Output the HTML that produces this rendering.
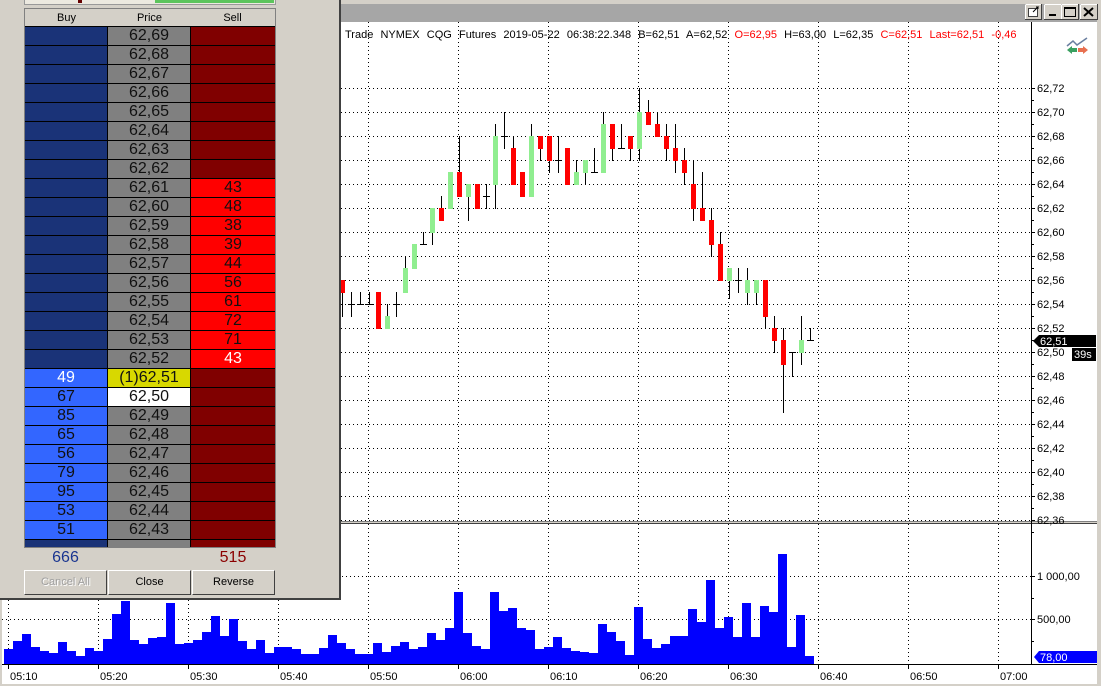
<!DOCTYPE html>
<html><head><meta charset="utf-8">
<style>
*{margin:0;padding:0;box-sizing:border-box}
body{width:1101px;height:686px;overflow:hidden;background:#d4d0c8;font-family:"Liberation Sans",Arial,sans-serif;position:relative}
#chart{position:absolute;left:0;top:0}
#dom{position:absolute;left:0;top:0;width:341px;height:600px;background:#d4d0c8;border-right:2px solid #404040;border-bottom:2px solid #404040}
.top{position:absolute;left:24px;top:0;width:252px;height:5px;background:#ece9e0;border:1px solid #999;border-top:none}
.top .g{position:absolute;left:130px;top:0;width:119px;height:3px;background:#5cc45c}
.top .r{position:absolute;left:53px;top:0;width:4px;height:3px;background:#600}
.grid{position:absolute;left:24px;top:8px;width:252px;height:540px;border:1px solid #808080;overflow:hidden;background:#000}
.hdr{display:flex;height:18px;background:#d4d0c8;font-size:11px;line-height:18px;border-bottom:1px solid #000}
.hdr div{width:83px;text-align:center}
.row{display:flex;height:19px;border-bottom:1px solid #000;font-size:16px;line-height:18px}
.row div{text-align:center;border-right:1px solid #000;color:#111}
.row div:nth-child(1){width:83px}
.row div:nth-child(2){width:83px;background:#808080}
.row div:nth-child(3){width:84px;border-right:none}
.tot{position:absolute;top:549px;font-size:16px}
.btn{position:absolute;top:570px;height:25px;width:83px;font-size:11px;text-align:center;line-height:23px;background:#d4d0c8;border:1px solid;border-color:#fff #404040 #404040 #fff}
</style></head><body>
<svg id="chart" width="1101" height="686" xmlns="http://www.w3.org/2000/svg" font-family="Liberation Sans, Arial, sans-serif"></svg>
<div id="dom">
<div class="top"><div class="r"></div><div class="g"></div></div>
<div class="grid" id="grid"><div class="hdr"><div>Buy</div><div>Price</div><div>Sell</div></div></div>
<div class="tot" style="left:24px;width:83px;text-align:center;color:#1a3590">666</div>
<div class="tot" style="left:191px;width:84px;text-align:center;color:#8b0000">515</div>
<div class="btn" style="left:24px;color:#a0a0a0;text-shadow:1px 1px #fff">Cancel All</div>
<div class="btn" style="left:108px">Close</div>
<div class="btn" style="left:192px">Reverse</div>
</div>
<script>
var g=document.getElementById('grid'),h='';
var sells={61:43,60:48,59:38,58:39,57:44,56:56,55:61,54:72,53:71,52:43};
var buys={51:49,50:67,49:85,48:65,47:56,46:79,45:95,44:53,43:51};
for(var p=69;p>=42;p--){
 var b=buys[p],s=sells[p];
 var bb=b!==undefined?'#3366ff':'#1a3378';
 var sb=p<=61&&p>=52?'#ff0000':'#800000';
 var pc='#808080',pt='#111',lab=p==42?'':'62,'+p;
 if(p==51){pc='#d8d800';lab='(1)62,51'}
 if(p==50){pc='#fff'}
 var bt=p==51?'#fff':'#111', st=p==52?'#fff':'#111';
 h+='<div class="row"><div style="background:'+bb+';color:'+bt+'">'+(b||'')+'</div><div style="background:'+pc+';color:'+pt+'">'+lab+'</div><div style="background:'+sb+';color:'+st+'">'+(s||'')+'</div></div>';
}
g.innerHTML+=h;

var svg='';
function R(x,y,w,hh,c){svg+='<rect x="'+x+'" y="'+y+'" width="'+w+'" height="'+hh+'" fill="'+c+'"/>'}
function L(x1,y1,x2,y2,c,d){svg+='<line x1="'+x1+'" y1="'+y1+'" x2="'+x2+'" y2="'+y2+'" stroke="'+c+'" stroke-width="1"'+(d?' stroke-dasharray="1,3"':'')+'/>'}
function T(x,y,t,c,s,a){svg+='<text x="'+x+'" y="'+y+'" fill="'+(c||'#000')+'" font-size="'+(s||11)+'"'+(a?' text-anchor="'+a+'"':'')+'>'+t+'</text>'}
R(0,0,1101,686,'#d4d0c8');
R(0,4,1097,18,'#a6a6a6');
R(2,22,1095,662,'#fff');
function BTN(x,w){R(x,4,w,16,'#d4d0c8');svg+='<rect x="'+(x+0.5)+'" y="4.5" width="'+(w-1)+'" height="15" fill="none" stroke="#404040"/>';L(x+0.5,4.5,x+w-1,4.5,'#fff');L(x+0.5,4.5,x+0.5,19,'#fff');}
BTN(1025,17);svg+='<rect x="1028.5" y="8.5" width="9" height="8" fill="#fff" stroke="#404040"/><polyline points="1033,12 1038,7 1036,7 1038,7 1038,9" fill="none" stroke="#000"/>';
BTN(1044,18);R(1049,14,7,2,'#000');
BTN(1061,18);svg+='<rect x="1064.5" y="7.5" width="11" height="9" fill="none" stroke="#000"/>';R(1064,7,12,2,'#000');
BTN(1080,18);svg+='<path d="M1084,8 L1093,16 M1093,8 L1084,16" stroke="#000" stroke-width="2"/>';
for(var i=0;i<19;i++){var y=88+i*24+0.5;L(341,y,1031,y,'#000',1)}
for(var i=0;i<12;i++){var x=8+i*90+0.5;L(x,22,x,520,'#000',1);L(x,524,x,663,'#000',1)}
L(2,576.5,1031,576.5,'#000',1);L(2,619.5,1031,619.5,'#000',1);
R(2,521,1095,3,'#d4d0c8');L(2,521.5,1097,521.5,'#808080');L(2,523.5,1097,523.5,'#404040');
L(1031.5,22,1031.5,664,'#000');
L(2,664.5,1097,664.5,'#000');
for(var i=0;i<19;i++){var y=88+i*24;var p=(62.72-i*0.02).toFixed(2).replace('.',',');L(1031,y+0.5,1035,y+0.5,'#000');L(1031,y+12.5,1034,y+12.5,'#000');T(1037,y+4,p)}
L(1031,576.5,1035,576.5,'#000');T(1037,580,'1 000,00');
L(1031,619.5,1035,619.5,'#000');T(1037,623,'500,00');
L(1031,598.5,1034,598.5,'#000');L(1031,641.5,1034,641.5,'#000');
svg+='<polygon points="1034,657 1039,651 1097,651 1097,663 1039,663" fill="#0000ff"/>';T(1040,661,'78,00','#fff');
svg+='<polygon points="1033,341 1039,335 1096,335 1096,347 1039,347" fill="#000"/>';T(1040,345,'62,51','#fff');
R(1072,348,24,13,'#000');T(1074,358,'39s','#fff');
var tl=['05:10','05:20','05:30','05:40','05:50','06:00','06:10','06:20','06:30','06:40','06:50','07:00'];
for(var i=0;i<12;i++){var x=8+i*90;L(x+0.5,664,x+0.5,669,'#000');T(x+2,680,tl[i])}
svg+='<text x="345" y="38" font-size="11" word-spacing="4.1"><tspan>Trade NYMEX CQG Futures 2019-05-22 06:38:22.348 B=62,51 A=62,52 </tspan><tspan fill="#f00">O=62,95</tspan><tspan> H=63,00 L=62,35 </tspan><tspan fill="#f00">C=62,51 Last=62,51 -0,46</tspan></text>';
svg+='<polyline points="1067,46 1073,41 1077,45 1087,38" fill="none" stroke="#6a7fa0" stroke-width="1.5"/>';
svg+='<polygon points="1067,50 1072,46 1072,48 1077,48 1077,52 1072,52 1072,54" fill="#3aa060"/>';
svg+='<polygon points="1088,50 1083,46 1083,48 1078,48 1078,52 1083,52 1083,54" fill="#e87050"/>';
var C=[[56,55,56,53],[54,54,55,53],[54,54,55,54],[54,54,55,54],[55,52,55,52],[52,53,54,52],[54,54,55,53],[55,57,58,55],[57,59,59,57],[59,59,60,59],[60,62,62,59],[62,61,63,61],[62,65,65,62],[65,63,68,63],[63,64,64,61],[64,62,64,62],[63,63,64,62],[64,68,69,62],[68,68,70,67],[67,64,68,64],[65,63,65,63],[63,68,69,63],[68,67,68,66],[68,66,68,65],[66,66,68,65],[67,64,67,64],[64,65,66,64],[65,66,66,64],
[65,65,67,65],[65,69,70,65],[69,67,69,66],[67,67,69,67],[68,67,68,66],[67,70,72,66],[70,69,71,69],[69,68,70,68],[68,67,69,66],[67,66,69,65],[66,65,67,64],[64,62,66,61],[62,61,65,61],[61,59,62,58],[59,56,60,56],[56,57,57,54.5],[56,56,57,55],[55,56,57,54],[55,56,56,54],[56,53,56,52],[52,51,53,50],[51,49,52,45],[50,50,50,48],[50,51,53,49],[51,51,52,51]];
function Y(p){return 88+(72-p)*12}
C.forEach(function(c,i){var x=342+i*9,o=c[0],cl=c[1];
 L(x+0.5,Y(c[2]),x+0.5,Y(c[3])+1,'#000');
 if(o==cl){L(x-3,Y(o)+0.5,x+4,Y(o)+0.5,'#000')}
 else{var top=Y(Math.max(o,cl)),bot=Y(Math.min(o,cl));R(x-2,top,5,bot-top+1,cl>o?'#90ee90':'#ff0000')}
});
var V=[649,641,634,647,651,653,642,651,656,648,651,639,614,601,640,644,638,637,603,644,643,640,632,616,636,619,641,649,640,653,647,647,649,654,654,648,635,643,649,654,654,643,652,646,642,649,647,633,640,628,592,633,646,649,592,611,608,628,630,649,647,637,648,651,652,653,624,632,641,655,607,639,648,644,636,636,609,622,580,628,617,637,603,637,606,612,554,647,615,656];
V.forEach(function(t,j){R(4+9*j,t,9,664-t,'#0000ff')});
document.getElementById('chart').innerHTML=svg;
</script>
</body></html>
